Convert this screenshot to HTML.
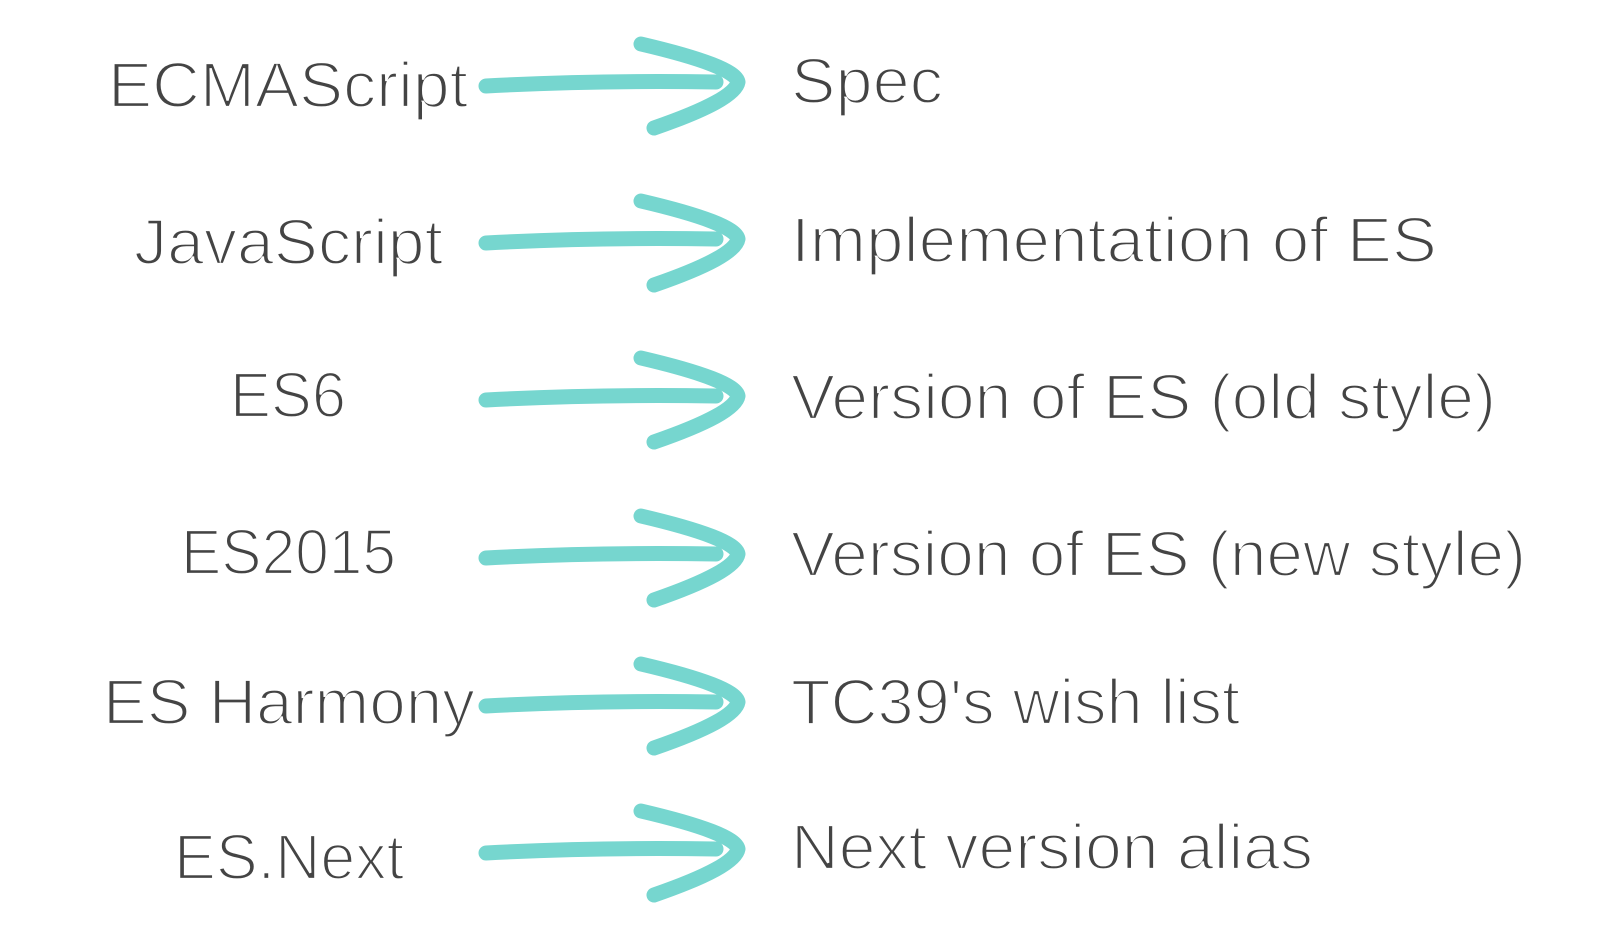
<!DOCTYPE html>
<html><head><style>
html,body{margin:0;padding:0;background:#fff;width:1613px;height:940px;overflow:hidden}
svg text{font-family:"Liberation Sans",sans-serif;font-size:64px;fill:#444;stroke:#fff;stroke-width:2.2px;paint-order:fill stroke}
</style></head><body>
<svg width="1613" height="940" viewBox="0 0 1613 940" xmlns="http://www.w3.org/2000/svg">
<defs>
<g id="arr" fill="none" stroke="#76d6cf" stroke-width="15" stroke-linecap="round" stroke-linejoin="round">
<path d="M486 86 Q600 80 716 82"/>
<path d="M641 44 Q735 66 738 82 Q735 100 654 128"/>
</g>
</defs>
<use href="#arr" y="0"/>
<use href="#arr" y="157"/>
<use href="#arr" y="314"/>
<use href="#arr" y="472"/>
<use href="#arr" y="620"/>
<use href="#arr" y="767"/>

<text x="108" y="107" textLength="360" lengthAdjust="spacingAndGlyphs">ECMAScript</text>
<text x="134" y="264" textLength="309" lengthAdjust="spacingAndGlyphs">JavaScript</text>
<text x="230" y="417" textLength="116" lengthAdjust="spacingAndGlyphs">ES6</text>
<text x="181" y="574" textLength="215" lengthAdjust="spacingAndGlyphs">ES2015</text>
<text x="103" y="724" textLength="372" lengthAdjust="spacingAndGlyphs">ES Harmony</text>
<text x="174" y="879" textLength="230" lengthAdjust="spacingAndGlyphs">ES.Next</text>

<text x="791" y="103" textLength="152" lengthAdjust="spacingAndGlyphs">Spec</text>
<text x="791" y="262" textLength="646" lengthAdjust="spacingAndGlyphs">Implementation of ES</text>
<text x="791" y="419" textLength="705" lengthAdjust="spacingAndGlyphs">Version of ES (old style)</text>
<text x="791" y="576" textLength="735" lengthAdjust="spacingAndGlyphs">Version of ES (new style)</text>
<text x="791" y="724" textLength="449" lengthAdjust="spacingAndGlyphs">TC39's wish list</text>
<text x="791" y="869" textLength="522" lengthAdjust="spacingAndGlyphs">Next version alias</text>
</svg>
</body></html>
